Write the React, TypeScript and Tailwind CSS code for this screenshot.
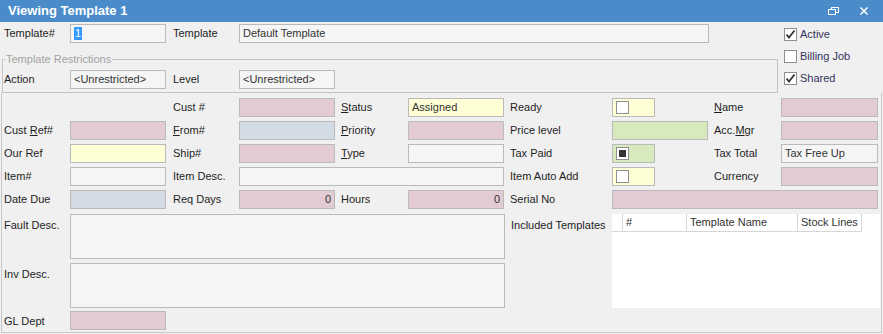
import React from 'react';

const font = { fontFamily: '"Liberation Sans", Arial, sans-serif' };

const tone: Record<string, string> = {
    white: 'bg-[#f5f5f5]',
    pink: 'bg-[#e3cbd4]',
    blue: 'bg-[#d3dce5]',
    yellow: 'bg-[#ffffd6]',
    green: 'bg-[#d6eabd]',
};

function Field({ color = 'white', value, right, className = '' }: { color?: string; value?: React.ReactNode; right?: boolean; className?: string }) {
    return (
        <div className={`h-[19px] border border-[#bababa] ${tone[color]} flex items-center px-[3px] text-[11px] text-[#333] ${right ? 'justify-end' : ''} ${className}`}>
            {value}
        </div>
    );
}

function Label({ children, className = '' }: { children: React.ReactNode; className?: string }) {
    return <div className={`h-[19px] flex items-center text-[11px] text-[#1e1e1e] whitespace-nowrap ${className}`}><span>{children}</span></div>;
}

function Box({ state }: { state?: 'check' | 'fill' }) {
    return (
        <div className="w-[13px] h-[13px] border border-[#8f8f8f] bg-white flex items-center justify-center shrink-0">
            {state === 'check' && (
                <svg width="11" height="11" viewBox="0 0 11 11">
                    <path d="M1.5 5.5 L4 8.5 L9.5 1.5" fill="none" stroke="#333" strokeWidth="1.8" />
                </svg>
            )}
            {state === 'fill' && <div className="w-[7px] h-[7px] bg-[#333]" />}
        </div>
    );
}

function CheckField({ color, state }: { color: string; state?: 'check' | 'fill' }) {
    return (
        <div className={`h-[19px] w-[43px] border border-[#bababa] ${tone[color]} flex items-center pl-[3px]`}>
            <Box state={state} />
        </div>
    );
}

function Check({ label, state }: { label: string; state?: 'check' | 'fill' }) {
    return (
        <div className="h-[13px] flex items-center gap-[3px] text-[11px] text-[#34345e]">
            <Box state={state} />
            <span>{label}</span>
        </div>
    );
}

export default function App() {
    return (
        <div style={font} className="w-[883px] h-[334px] bg-[#f0f0f0] flex flex-col overflow-hidden">
            <div className="h-[22px] shrink-0 bg-[#4a8cca] flex items-center pl-[8px] pr-[15px]">
                <span className="text-[13px] font-bold text-white flex-1">Viewing Template 1</span>
                <svg width="11" height="8" viewBox="0 0 11 8" className="mr-[21px]">
                    <rect x="3.5" y="0.5" width="7" height="5" fill="none" stroke="white" />
                    <rect x="0.5" y="2.5" width="7" height="5" fill="#4a8cca" stroke="white" />
                </svg>
                <svg width="8" height="8" viewBox="0 0 8 8">
                    <path d="M0.5 0.5 L7.5 7.5 M7.5 0.5 L0.5 7.5" stroke="white" strokeWidth="1.5" />
                </svg>
            </div>

            <div className="flex">
                <div className="w-[778px] pl-[2px]">
                    <div className="flex items-center mt-[2px] pl-[2px]">
                        <Label className="w-[66px]">Template#</Label>
                        <Field className="w-[96px]" value={<span className="bg-[#3399ff] text-white px-[1px] leading-[13px]">1</span>} />
                        <Label className="w-[73px] pl-[7px]">Template</Label>
                        <Field className="w-[470px]" value="Default Template" />
                    </div>
                    <fieldset className="mt-[10px] border border-[#c3c3c3] pl-[1px] pb-[3px] w-[776px]">
                        <legend className="ml-[1px] px-[1px] text-[11px] leading-[13px] text-[#a3a3a3]">Template Restrictions</legend>
                        <div className="flex items-center mt-[4px]">
                            <Label className="w-[66px]">Action</Label>
                            <Field className="w-[96px]" value="<Unrestricted>" />
                            <Label className="w-[73px] pl-[7px]">Level</Label>
                            <Field className="w-[96px]" value="<Unrestricted>" />
                        </div>
                    </fieldset>
                </div>
                <div className="flex flex-col gap-[9px] pl-[6px] pt-[6px]">
                    <Check label="Active" state="check" />
                    <Check label="Billing Job" />
                    <Check label="Shared" state="check" />
                </div>
            </div>

            <div className="flex-1 ml-[1px] mr-[1px] mb-[1px] border-x border-b border-[#c8c8c8] pl-[2px] pt-[5px]">
                <div className="grid grid-cols-[66px_96px_73px_96px_73px_96px_108px_96px_73px_97px] gap-y-[4px]">
                    <div />
                    <div />
                    <Label className="pl-[7px]">Cust #</Label>
                    <Field color="pink" />
                    <Label className="pl-[6px]"><u>S</u>tatus</Label>
                    <Field color="yellow" value="Assigned" />
                    <Label className="pl-[6px]">Ready</Label>
                    <CheckField color="yellow" />
                    <Label className="pl-[6px]"><u>N</u>ame</Label>
                    <Field color="pink" />

                    <Label>Cust <u>R</u>ef#</Label>
                    <Field color="pink" />
                    <Label className="pl-[7px]"><u>F</u>rom#</Label>
                    <Field color="blue" />
                    <Label className="pl-[6px]"><u>P</u>riority</Label>
                    <Field color="pink" />
                    <Label className="pl-[6px]">Price level</Label>
                    <Field color="green" />
                    <Label className="pl-[6px]">Acc.<u>M</u>gr</Label>
                    <Field color="pink" />

                    <Label>Our Ref</Label>
                    <Field color="yellow" />
                    <Label className="pl-[7px]">Ship#</Label>
                    <Field color="pink" />
                    <Label className="pl-[6px]"><u>T</u>ype</Label>
                    <Field />
                    <Label className="pl-[6px]">Tax Paid</Label>
                    <CheckField color="green" state="fill" />
                    <Label className="pl-[6px]">Tax Total</Label>
                    <Field value="Tax Free Up" />

                    <Label>Item#</Label>
                    <Field />
                    <Label className="pl-[7px]">Item Desc.</Label>
                    <Field className="col-span-3" />
                    <Label className="pl-[6px]">Item Auto Add</Label>
                    <CheckField color="yellow" />
                    <Label className="pl-[6px]">Currency</Label>
                    <Field color="pink" />

                    <Label>Date Due</Label>
                    <Field color="blue" />
                    <Label className="pl-[7px]">Req Days</Label>
                    <Field color="pink" value="0" right />
                    <Label className="pl-[6px]">Hours</Label>
                    <Field color="pink" value="0" right />
                    <Label className="pl-[6px]">Serial No</Label>
                    <Field color="pink" className="col-span-3" />
                </div>

                <div className="flex mt-[5px]">
                    <div className="grid grid-cols-[66px_435px] gap-y-[4px] content-start">
                        <Label className="self-start mt-[2px]">Fault Desc.</Label>
                        <div className="h-[45px] border border-[#bababa] bg-[#f5f5f5]" />
                        <Label className="self-start mt-[2px]">Inv Desc.</Label>
                        <div className="h-[45px] border border-[#bababa] bg-[#f5f5f5]" />
                        <Label>GL Dept</Label>
                        <Field color="pink" className="w-[96px] -mt-[1px]" />
                    </div>
                    <Label className="pl-[6px] w-[107px] mt-[2px]">Included Templates</Label>
                    <div className="w-[268px] h-[94px] bg-white text-[11px] text-[#333]">
                        <div className="flex h-[18px] items-center">
                            <div className="w-[11px] h-full border-r border-b border-[#d6d6d6]" />
                            <div className="w-[64px] h-full border-r border-b border-[#d6d6d6] pl-[3px] flex items-center">#</div>
                            <div className="w-[111px] h-full border-r border-b border-[#d6d6d6] pl-[3px] flex items-center">Template Name</div>
                            <div className="w-[64px] h-full border-r border-b border-[#d6d6d6] pl-[3px] flex items-center">Stock Lines</div>
                        </div>
                    </div>
                </div>
            </div>
        </div>
    );
}
